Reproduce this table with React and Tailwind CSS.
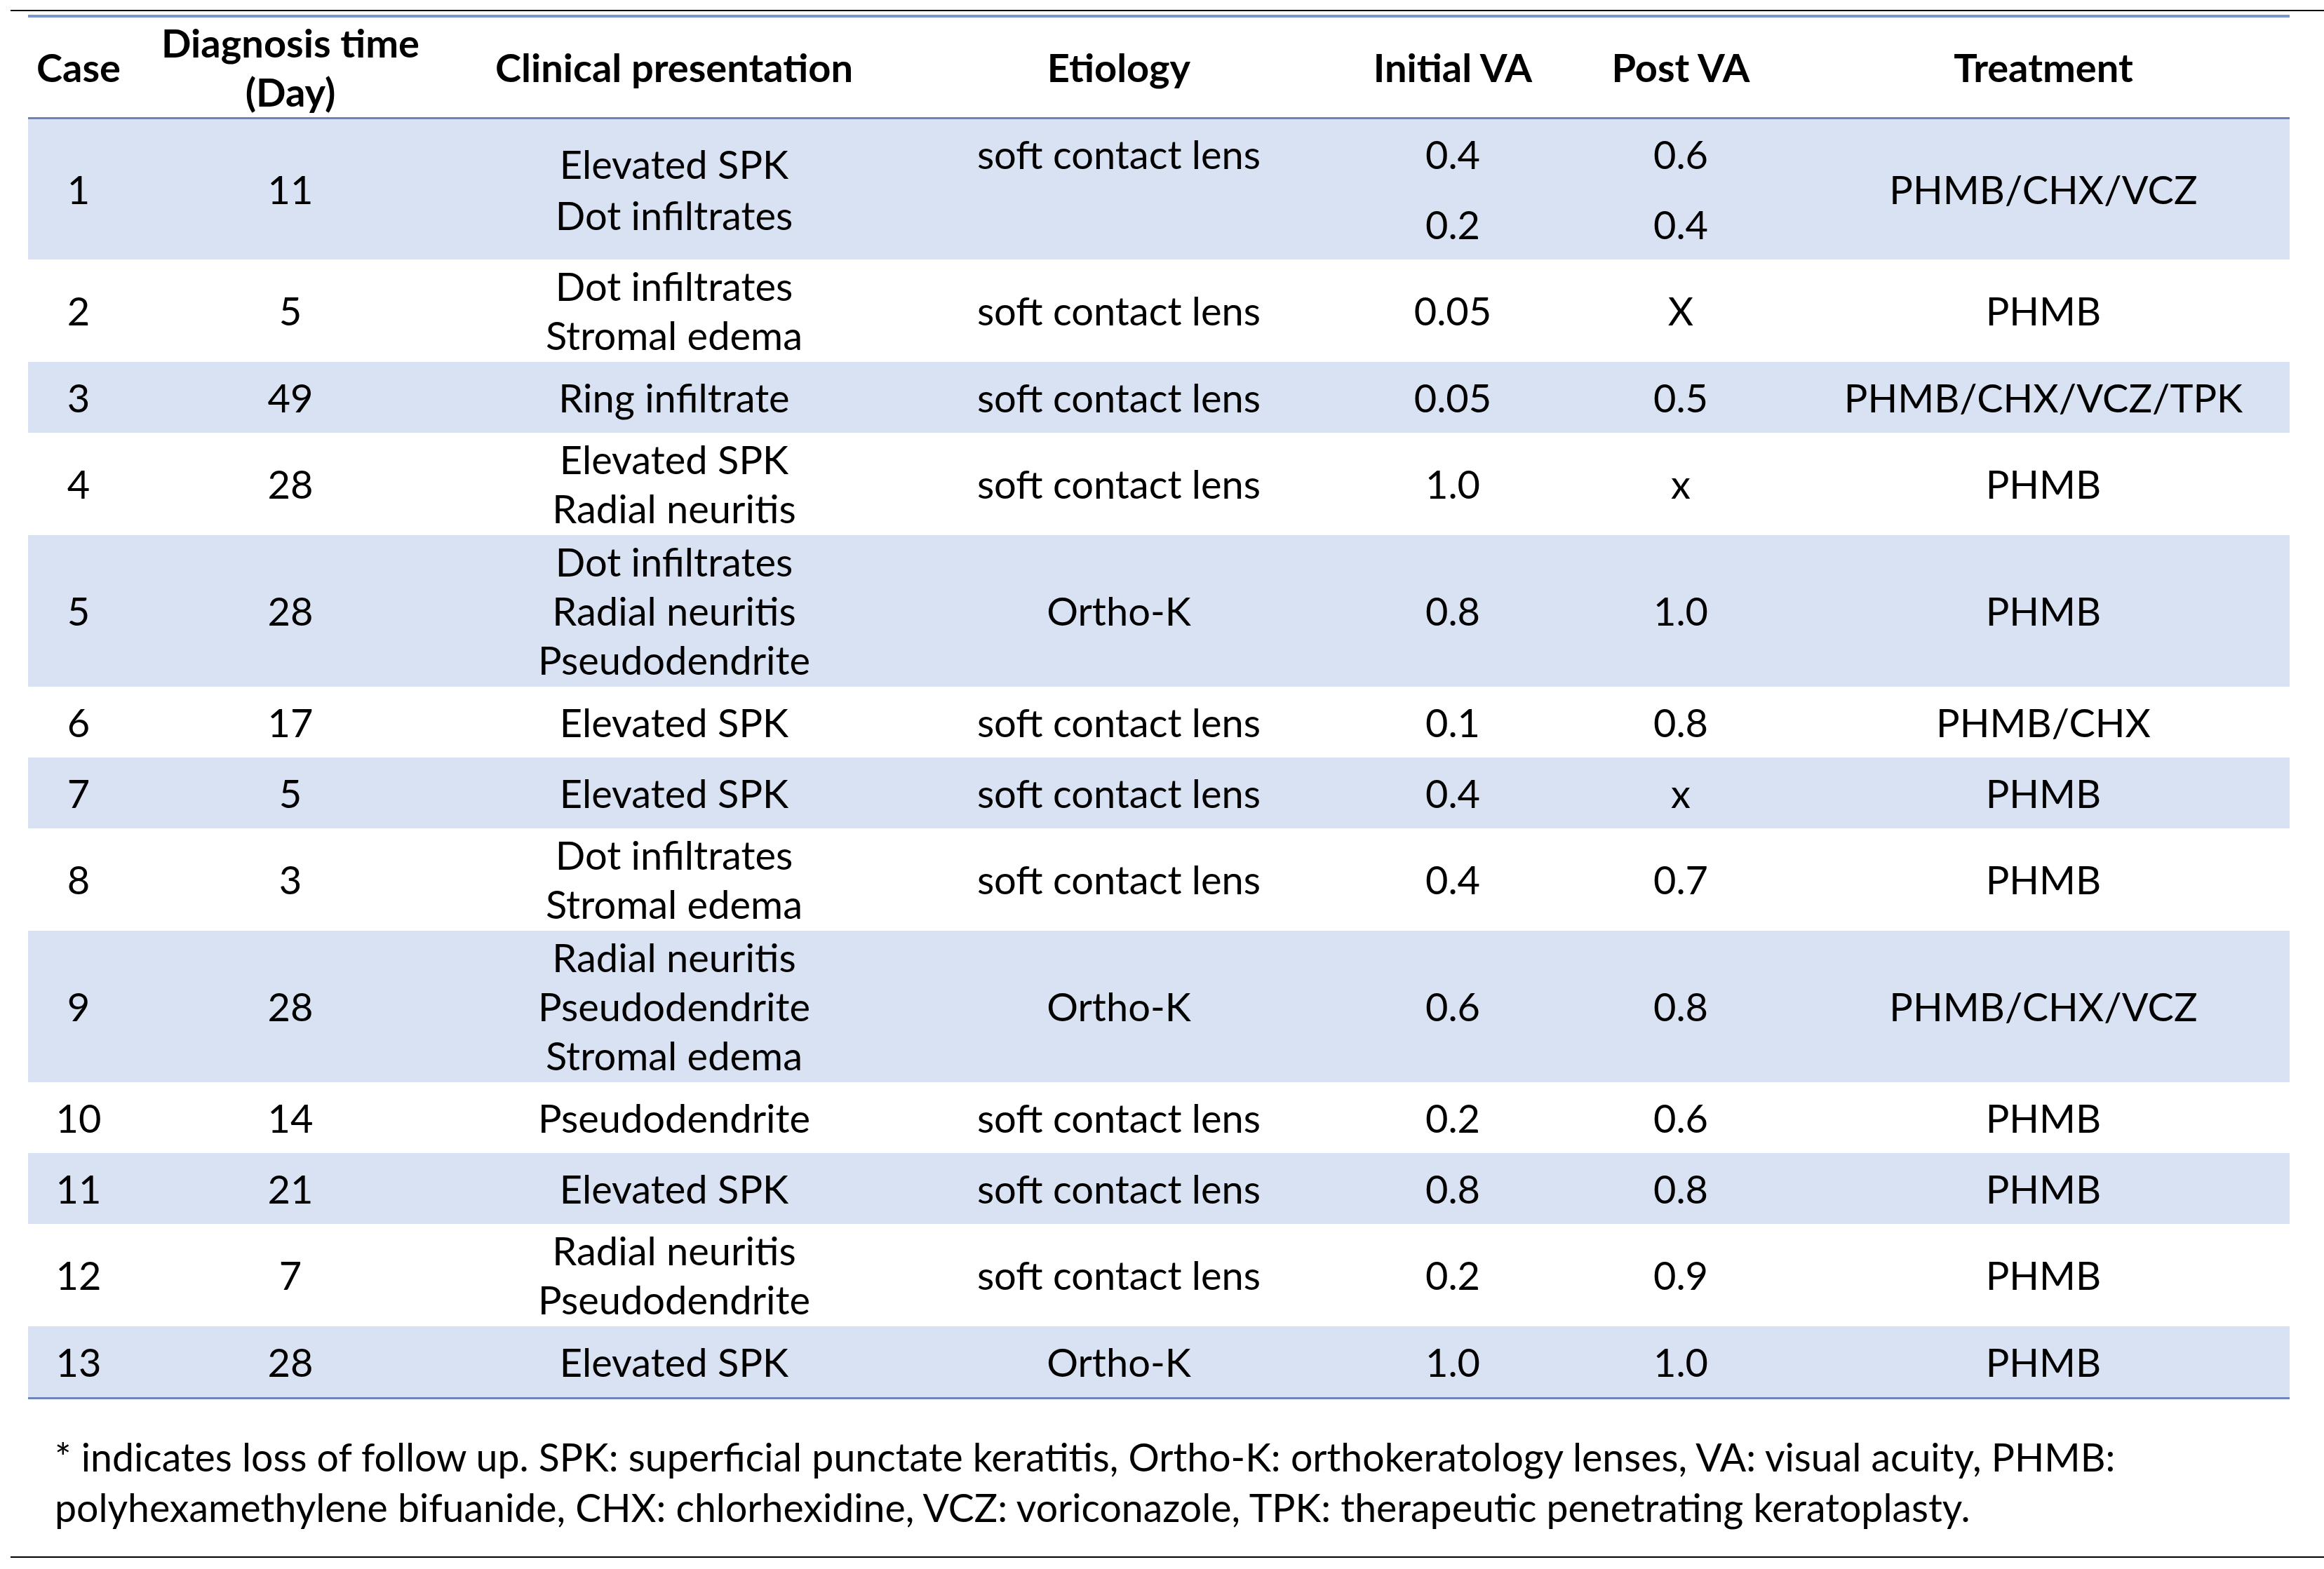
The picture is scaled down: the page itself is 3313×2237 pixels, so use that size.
import React from 'react';

const cols = 'grid grid-cols-[144px_460px_634px_634px_318px_332px_702px]';

const rows = [
    { id: '2', day: '5', clin: ['Dot infiltrates', 'Stromal edema'], etio: 'soft contact lens', init: '0.05', post: 'X', tx: 'PHMB' },
    { id: '3', day: '49', clin: ['Ring infiltrate'], etio: 'soft contact lens', init: '0.05', post: '0.5', tx: 'PHMB/CHX/VCZ/TPK' },
    { id: '4', day: '28', clin: ['Elevated SPK', 'Radial neuritis'], etio: 'soft contact lens', init: '1.0', post: 'x', tx: 'PHMB' },
    { id: '5', day: '28', clin: ['Dot infiltrates', 'Radial neuritis', 'Pseudodendrite'], etio: 'Ortho-K', init: '0.8', post: '1.0', tx: 'PHMB' },
    { id: '6', day: '17', clin: ['Elevated SPK'], etio: 'soft contact lens', init: '0.1', post: '0.8', tx: 'PHMB/CHX' },
    { id: '7', day: '5', clin: ['Elevated SPK'], etio: 'soft contact lens', init: '0.4', post: 'x', tx: 'PHMB' },
    { id: '8', day: '3', clin: ['Dot infiltrates', 'Stromal edema'], etio: 'soft contact lens', init: '0.4', post: '0.7', tx: 'PHMB' },
    { id: '9', day: '28', clin: ['Radial neuritis', 'Pseudodendrite', 'Stromal edema'], etio: 'Ortho-K', init: '0.6', post: '0.8', tx: 'PHMB/CHX/VCZ' },
    { id: '10', day: '14', clin: ['Pseudodendrite'], etio: 'soft contact lens', init: '0.2', post: '0.6', tx: 'PHMB' },
    { id: '11', day: '21', clin: ['Elevated SPK'], etio: 'soft contact lens', init: '0.8', post: '0.8', tx: 'PHMB' },
    { id: '12', day: '7', clin: ['Radial neuritis', 'Pseudodendrite'], etio: 'soft contact lens', init: '0.2', post: '0.9', tx: 'PHMB' },
    { id: '13', day: '28', clin: ['Elevated SPK'], etio: 'Ortho-K', init: '1.0', post: '1.0', tx: 'PHMB' },
];

const Cell = ({ children }) => (
    <div className="flex flex-col items-center justify-center text-center whitespace-nowrap">{children}</div>
);

const App = () => {
    return (
        <div className="w-[3313px] h-[2237px] bg-white text-black font-['Lato','Liberation_Sans',sans-serif] text-[56px] leading-[70px]">
            <div className="pt-[14px] pl-[15px]">
                <div className="h-[2px] bg-black" />
            </div>

            <div className="ml-[40px] w-[3224px] mt-[5px]">
                <div className="h-[4px] bg-[#7b96cf]" />

                {/* header */}
                <div className={`${cols} h-[142px] font-bold`}>
                    <Cell>Case</Cell>
                    <Cell>
                        <span>Diagnosis time</span>
                        <span>(Day)</span>
                    </Cell>
                    <Cell>Clinical presentation</Cell>
                    <Cell>Etiology</Cell>
                    <Cell>Initial VA</Cell>
                    <Cell>Post VA</Cell>
                    <Cell>Treatment</Cell>
                </div>
                <div className="h-[3px] bg-[#6d84ba]" />

                {/* case 1 has two VA readings */}
                <div className={`${cols} h-[200px] bg-[#d9e2f3]`}>
                    <Cell>1</Cell>
                    <Cell>11</Cell>
                    <div className="flex flex-col items-center justify-center leading-[73px]">
                        <span>Elevated SPK</span>
                        <span>Dot infiltrates</span>
                    </div>
                    <div className="flex flex-col">
                        <div className="h-[100px] flex items-center justify-center">soft contact lens</div>
                    </div>
                    <div className="flex flex-col">
                        <div className="h-[100px] flex items-center justify-center">0.4</div>
                        <div className="h-[100px] flex items-center justify-center">0.2</div>
                    </div>
                    <div className="flex flex-col">
                        <div className="h-[100px] flex items-center justify-center">0.6</div>
                        <div className="h-[100px] flex items-center justify-center">0.4</div>
                    </div>
                    <Cell>PHMB/CHX/VCZ</Cell>
                </div>

                {rows.map((r, i) => (
                    <div
                        key={r.id}
                        className={`${cols} min-h-[101px] py-[3px] ${i % 2 === 1 ? 'bg-[#d9e2f3]' : 'bg-white'}`}
                    >
                        <Cell>{r.id}</Cell>
                        <Cell>{r.day}</Cell>
                        <Cell>
                            {r.clin.map((c) => (
                                <span key={c}>{c}</span>
                            ))}
                        </Cell>
                        <Cell>{r.etio}</Cell>
                        <Cell>{r.init}</Cell>
                        <Cell>{r.post}</Cell>
                        <Cell>{r.tx}</Cell>
                    </div>
                ))}

                <div className="h-[3px] bg-[#6d84ba]" />
            </div>

            <div className="pl-[78px] pt-[46px] text-[55.4px] leading-[72px] whitespace-nowrap">
                <div>* indicates loss of follow up. SPK: superficial punctate keratitis, Ortho-K: orthokeratology lenses, VA: visual acuity, PHMB:</div>
                <div>polyhexamethylene bifuanide, CHX: chlorhexidine, VCZ: voriconazole, TPK: therapeutic penetrating keratoplasty.</div>
            </div>

            <div className="pl-[15px] pt-[34px]">
                <div className="h-[2px] bg-black" />
            </div>
        </div>
    );
};

export default App;
